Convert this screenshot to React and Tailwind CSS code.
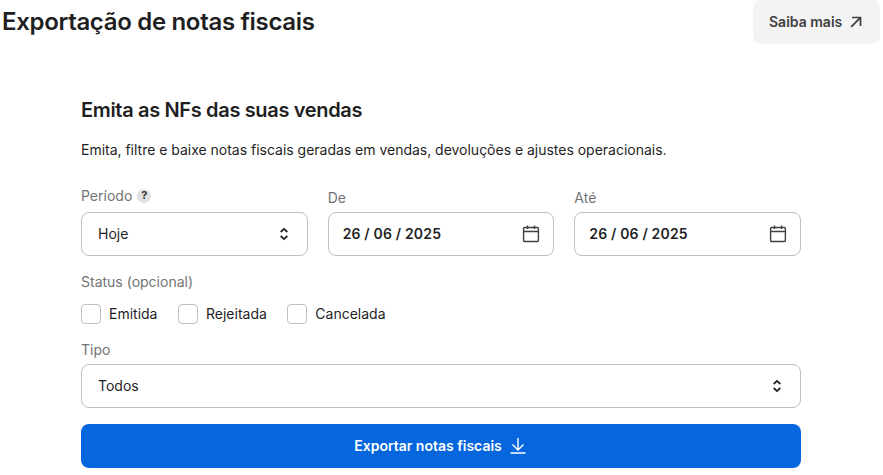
function Chevrons() {
  return (
    <svg className="size-4 shrink-0" viewBox="0 0 16 16" fill="none" stroke="#222" strokeWidth="1.8">
      <path d="M4.7 6 8 2.9 11.3 6M4.7 10 8 13.1l3.3-3.1" />
    </svg>
  );
}

function Calendar() {
  return (
    <svg className="size-5 shrink-0" viewBox="0 0 20 20" fill="none" stroke="#404040" strokeWidth="1.4">
      <rect x="2.6" y="3.5" width="14.8" height="14" rx="1" />
      <path d="M2.5 7.5h15M6.5 1.5v3.6M13.5 1.5v3.6" />
    </svg>
  );
}

function Select({ value }) {
  return (
    <button type="button" className="flex h-11 w-full items-center justify-between rounded-lg border border-[#bfbfbf] bg-white pr-[15px] pl-4 text-left">
      <span>{value}</span>
      <Chevrons />
    </button>
  );
}

function DateField({ label }) {
  return (
    <div>
      <div className="h-[26px] pt-0.5 leading-5 text-[#737373]">{label}</div>
      <div className="flex h-11 items-center justify-between rounded-lg border border-[#bfbfbf] pr-3 pl-[14px]">
        <span className="font-semibold tracking-[0.17px]">26 / 06 / 2025</span>
        <Calendar />
      </div>
    </div>
  );
}

function Check({ label }) {
  return (
    <div className="flex items-center gap-2">
      <span className="size-5 rounded border border-[#bfbfbf]" />
      <span>{label}</span>
    </div>
  );
}

export default function App() {
  return (
    <div className="h-[475px] w-full overflow-hidden bg-white font-['Inter',sans-serif] text-sm text-[#1f1f1f]">
      <header className="flex h-11 items-center justify-between pr-[3px] pl-0.5">
        <h1 className="text-[24px] leading-8 font-semibold tracking-[-0.32px]">Exportação de notas fiscais</h1>
        <button type="button" className="flex h-11 w-[127px] items-center gap-1.5 rounded-lg bg-[#f3f3f3] pl-4 font-semibold whitespace-nowrap text-[#404040]">
          Saiba mais
          <svg className="size-4" viewBox="0 0 16 16" fill="none" stroke="currentColor" strokeWidth="1.7">
            <path d="M3.2 12.8 12.3 3.7M4 3.5h8.5V12" />
          </svg>
        </button>
      </header>
      <main className="ml-[81px] w-[720px] pt-[52px]">
        <h2 className="text-[20px] leading-7 font-semibold tracking-[-0.34px]">Emita as NFs das suas vendas</h2>
        <p className="mt-4 leading-5 tracking-[-0.015px]">Emita, filtre e baixe notas fiscais geradas em vendas, devoluções e ajustes operacionais.</p>
        <div className="mt-[26px] grid grid-cols-3 gap-5">
          <div>
            <div className="flex h-5 items-center gap-[5px] text-[#737373]">
              Período
              <span className="flex size-3.5 items-center justify-center rounded-full bg-[#dfe1e3] text-[11px] font-bold text-[#333]">?</span>
            </div>
            <div className="mt-1.5">
              <Select value="Hoje" />
            </div>
          </div>
          <DateField label="De" />
          <DateField label="Até" />
        </div>
        <div className="mt-4 leading-5 text-[#737373]">Status (opcional)</div>
        <div className="mt-3 flex gap-[20.5px]">
          <Check label="Emitida" />
          <Check label="Rejeitada" />
          <Check label="Cancelada" />
        </div>
        <div className="mt-4 mb-1 leading-5 text-[#737373]">Tipo</div>
        <Select value="Todos" />
        <button type="button" className="mt-4 flex h-11 w-full items-center justify-center gap-1.5 rounded-lg bg-[#0566de] font-semibold text-white">
          Exportar notas fiscais
          <svg className="size-5" viewBox="0 0 20 20" fill="none" stroke="currentColor" strokeWidth="1.4">
            <path d="M10 2v12M4.5 8.5 10 14l5.5-5.5M2.5 17h15" />
          </svg>
        </button>
      </main>
    </div>
  );
}
